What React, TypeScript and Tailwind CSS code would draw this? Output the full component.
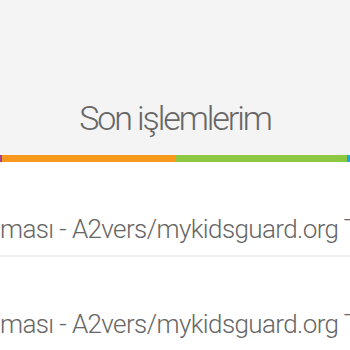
export default function App() {
  const text = "ması - A2vers/mykidsguard.org Tarihi";
  return (
    <div className="w-[350px] h-[350px] overflow-hidden bg-white" style={{ fontFamily: "Roboto, 'Liberation Sans', sans-serif" }}>
      <div className="h-[155px] bg-[#f4f4f4] flex items-end justify-center pb-[20px]">
        <h1 className="text-[34px] leading-none font-light text-[#666666] tracking-[-2.1px]">Son işlemlerim</h1>
      </div>
      <div className="flex h-[7px]">
        <div className="w-[2px] bg-[#a0449a]" />
        <div className="w-[173px] bg-[#f7981d]" />
        <div className="flex-1 bg-[#8dc63f]" />
        <div className="w-[3px] bg-[#1ea7e1]" />
      </div>
      <div className="h-[95px] flex items-end pb-[13px] border-b-2 border-[#f0f0f0] overflow-hidden">
        <span className="whitespace-nowrap text-[26px] leading-none font-light text-[#666666] tracking-[-0.6px]">{text}</span>
      </div>
      <div className="h-[93px] flex items-end pb-[13px] overflow-hidden">
        <span className="whitespace-nowrap text-[26px] leading-none font-light text-[#666666] tracking-[-0.6px]">{text}</span>
      </div>
    </div>
  );
}
